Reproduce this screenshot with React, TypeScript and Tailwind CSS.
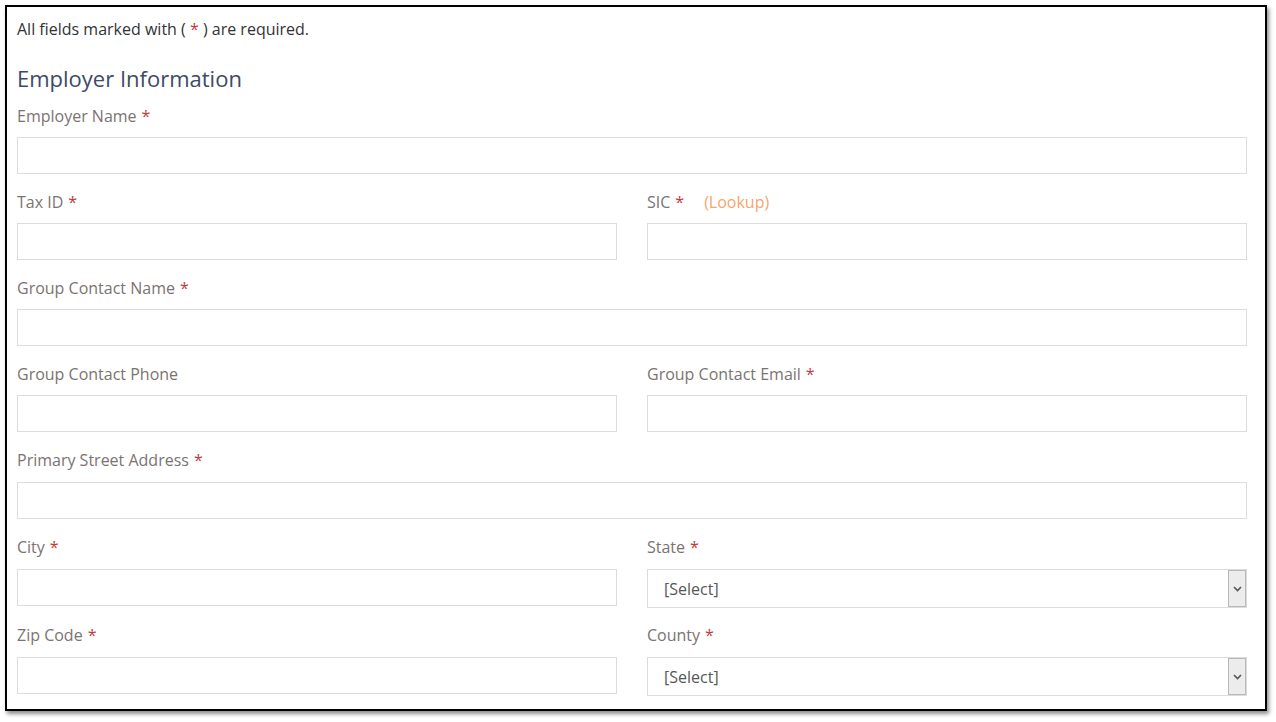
const font = { fontFamily: '"Open Sans", "Noto Sans", sans-serif' };

function Label({ text, required, extra, tight }: { text: string; required?: boolean; extra?: React.ReactNode; tight?: boolean }) {
  return (
    <div className={`h-[20px] text-[16px] leading-[20px] text-[#7b7371] flex items-center ${tight ? "mb-[11px]" : "mb-[12px]"}`}>
      <span>{text}</span>
      {required && <span className="text-[#c23b3b] ml-[5px]">*</span>}
      {extra}
    </div>
  );
}

function Input() {
  return <div className="h-[37px] border border-[#dcdcdc] bg-white" />;
}

function Select() {
  return (
    <div className="h-[39px] border border-[#dcdcdc] bg-white flex items-stretch">
      <div className="flex-1 pl-[16px] flex items-center text-[16px] text-[#585858]">[Select]</div>
      <div className="w-[18px] border border-[#b8b8b8] bg-[#ececec] flex items-center justify-center">
        <svg width="9" height="6" viewBox="0 0 9 6">
          <path d="M1 1 L4.5 4.5 L8 1" fill="none" stroke="#555" strokeWidth="1.6" />
        </svg>
      </div>
    </div>
  );
}

type FieldProps = {
  label: string;
  required?: boolean;
  extra?: React.ReactNode;
  select?: boolean;
  lower?: boolean;
  last?: boolean;
};

function Field({ label, required, extra, select, lower, last }: FieldProps) {
  return (
    <div className={last ? "mb-[17px]" : "mb-[18px]"}>
      <Label text={label} required={required} extra={extra} tight={!lower} />
      {select ? <Select /> : <Input />}
    </div>
  );
}

export default function App() {
  return (
    <div className="w-[1276px] h-[722px] bg-white pt-[5px] pl-[5px]" style={font}>
      <div className="w-[1262px] h-[706px] border-2 border-black bg-white shadow-[2px_3px_4px_rgba(0,0,0,0.45)] pl-[10px] pr-[18px] pt-[12px] overflow-hidden">
        <div className="text-[16px] leading-[20px] text-[#333]">
          All fields marked with ( <span className="text-[#c23b3b]">*</span> ) are required.
        </div>
        <h2 className="mt-[24px] mb-[13px] text-[22px] leading-[30px] text-[#3d4b66]">Employer Information</h2>

        <Field label="Employer Name" required />
        <div className="grid grid-cols-2 gap-x-[30px]">
          <Field label="Tax ID" required />
          <Field
            label="SIC"
            required
            extra={<span className="ml-[20px] text-[#f4a56e]">(Lookup)</span>}
          />
        </div>
        <Field label="Group Contact Name" required />
        <div className="grid grid-cols-2 gap-x-[30px]">
          <Field label="Group Contact Phone" />
          <Field label="Group Contact Email" required />
        </div>
        <Field label="Primary Street Address" required lower />
        <div className="grid grid-cols-2 gap-x-[30px]">
          <Field label="City" required lower last />
          <Field label="State" required select lower last />
        </div>
        <div className="grid grid-cols-2 gap-x-[30px]">
          <Field label="Zip Code" required lower />
          <Field label="County" required select lower />
        </div>
      </div>
    </div>
  );
}
